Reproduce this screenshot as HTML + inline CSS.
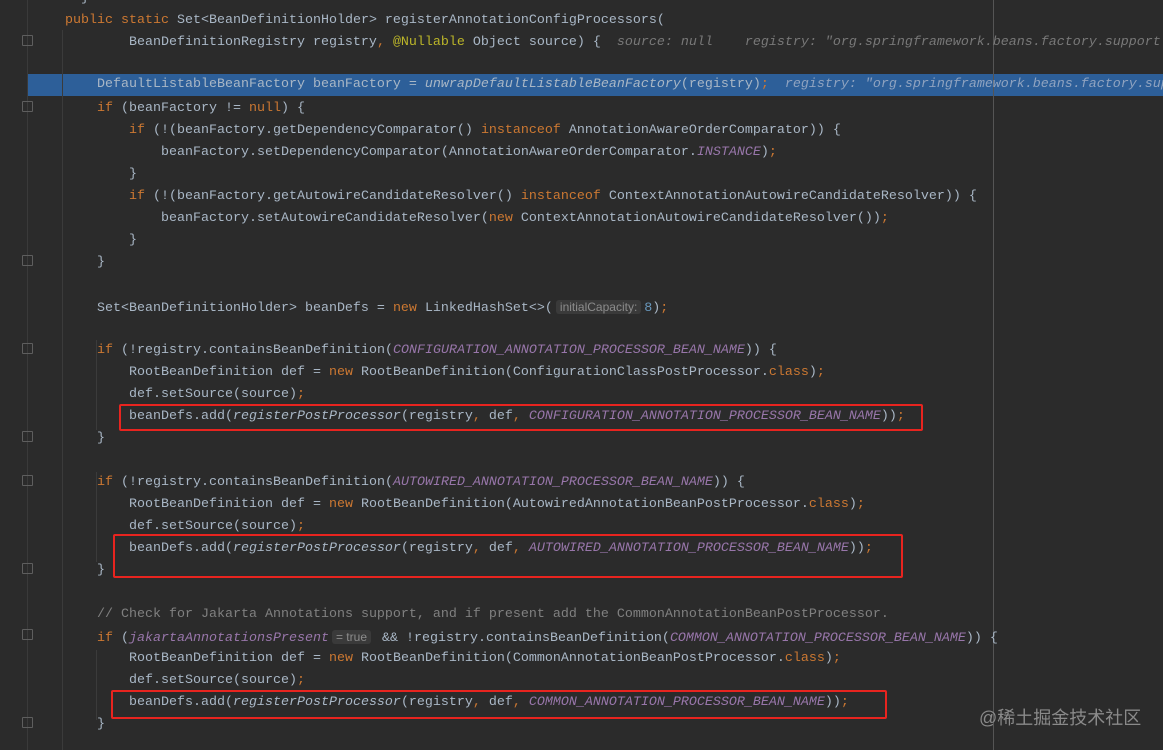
<!DOCTYPE html>
<html><head><meta charset="utf-8"><style>
body{margin:0;width:1163px;height:750px;background:#2b2b2b;overflow:hidden;position:relative;font-family:"Liberation Mono",monospace;font-size:13.33px;color:#a9b7c6}
.l{position:absolute;left:65px;right:0;overflow:hidden;height:22px;line-height:22px;white-space:pre}
.k{color:#cc7832}.i{font-style:italic}.c{color:#9876aa;font-style:italic}.n{color:#6897bb}.a{color:#bbb529}
.cm{color:#808080}.g{color:#787878;font-style:italic}
.p{font-family:"Liberation Sans",sans-serif;font-size:12px;color:#8c8c8c;background:#3a3a3a;border-radius:3px;padding:0 4px;margin:0 3px}
.hl{position:absolute;left:28px;right:0;top:74px;height:22px;background:#2d5f99}
.box{position:absolute;border:2px solid #e8241f;border-radius:2px}
.v{position:absolute;width:1px;background:#3b3b3b}
.f{position:absolute;left:22px;width:9px;height:9px;border:1px solid #5e5e5e;border-radius:1px}
</style></head><body>
<div class="hl"></div>
<div class="v" style="left:62px;top:30px;height:720px"></div>
<div class="v" style="left:27px;top:0;height:750px;background:#3a3a3a"></div>
<div class="v" style="left:993px;top:0;height:750px;background:#555"></div>
<div class="v" style="left:96px;top:340px;height:90px"></div>
<div class="v" style="left:96px;top:472px;height:90px"></div>
<div class="v" style="left:96px;top:650px;height:70px"></div>
<div class="f" style="top:35px"></div><div class="f" style="top:101px"></div><div class="f" style="top:255px"></div>
<div class="f" style="top:343px"></div><div class="f" style="top:431px"></div><div class="f" style="top:475px"></div>
<div class="f" style="top:563px"></div><div class="f" style="top:629px"></div><div class="f" style="top:717px"></div>
<div style="position:absolute;left:0;right:0;top:2px">
<div class="l" style="top:-14px">  }</div>
<div class="l" style="top:8px"><span class="k">public static </span>Set&lt;BeanDefinitionHolder&gt; registerAnnotationConfigProcessors(</div>
<div class="l" style="top:30px">        BeanDefinitionRegistry registry<span class="k">, </span><span class="a">@Nullable </span>Object source) {  <span class="g">source: null    registry: "org.springframework.beans.factory.support.DefaultListableBeanFactory</span></div>
<div class="l" style="top:72px">    DefaultListableBeanFactory beanFactory = <span class="i">unwrapDefaultListableBeanFactory</span>(registry)<span class="k">;</span>  <span class="g" style="color:#8fa3c0">registry: "org.springframework.beans.factory.support.DefaultListableBeanFactory</span></div>
<div class="l" style="top:96px">    <span class="k">if </span>(beanFactory != <span class="k">null</span>) {</div>
<div class="l" style="top:118px">        <span class="k">if </span>(!(beanFactory.getDependencyComparator() <span class="k">instanceof </span>AnnotationAwareOrderComparator)) {</div>
<div class="l" style="top:140px">            beanFactory.setDependencyComparator(AnnotationAwareOrderComparator.<span class="c">INSTANCE</span>)<span class="k">;</span></div>
<div class="l" style="top:162px">        }</div>
<div class="l" style="top:184px">        <span class="k">if </span>(!(beanFactory.getAutowireCandidateResolver() <span class="k">instanceof </span>ContextAnnotationAutowireCandidateResolver)) {</div>
<div class="l" style="top:206px">            beanFactory.setAutowireCandidateResolver(<span class="k">new </span>ContextAnnotationAutowireCandidateResolver())<span class="k">;</span></div>
<div class="l" style="top:228px">        }</div>
<div class="l" style="top:250px">    }</div>
<div class="l" style="top:294px">    Set&lt;BeanDefinitionHolder&gt; beanDefs = <span class="k">new </span>LinkedHashSet&lt;&gt;(<span class="p">initialCapacity:</span><span class="n">8</span>)<span class="k">;</span></div>
<div class="l" style="top:338px">    <span class="k">if </span>(!registry.containsBeanDefinition(<span class="c">CONFIGURATION_ANNOTATION_PROCESSOR_BEAN_NAME</span>)) {</div>
<div class="l" style="top:360px">        RootBeanDefinition def = <span class="k">new </span>RootBeanDefinition(ConfigurationClassPostProcessor.<span class="k">class</span>)<span class="k">;</span></div>
<div class="l" style="top:382px">        def.setSource(source)<span class="k">;</span></div>
<div class="l" style="top:404px">        beanDefs.add(<span class="i">registerPostProcessor</span>(registry<span class="k">, </span>def<span class="k">, </span><span class="c">CONFIGURATION_ANNOTATION_PROCESSOR_BEAN_NAME</span>))<span class="k">;</span></div>
<div class="l" style="top:426px">    }</div>
<div class="l" style="top:470px">    <span class="k">if </span>(!registry.containsBeanDefinition(<span class="c">AUTOWIRED_ANNOTATION_PROCESSOR_BEAN_NAME</span>)) {</div>
<div class="l" style="top:492px">        RootBeanDefinition def = <span class="k">new </span>RootBeanDefinition(AutowiredAnnotationBeanPostProcessor.<span class="k">class</span>)<span class="k">;</span></div>
<div class="l" style="top:514px">        def.setSource(source)<span class="k">;</span></div>
<div class="l" style="top:536px">        beanDefs.add(<span class="i">registerPostProcessor</span>(registry<span class="k">, </span>def<span class="k">, </span><span class="c">AUTOWIRED_ANNOTATION_PROCESSOR_BEAN_NAME</span>))<span class="k">;</span></div>
<div class="l" style="top:558px">    }</div>
<div class="l" style="top:602px">    <span class="cm">// Check for Jakarta Annotations support, and if present add the CommonAnnotationBeanPostProcessor.</span></div>
<div class="l" style="top:624px">    <span class="k">if </span>(<span class="c">jakartaAnnotationsPresent</span><span class="p">= true</span> &amp;&amp; !registry.containsBeanDefinition(<span class="c">COMMON_ANNOTATION_PROCESSOR_BEAN_NAME</span>)) {</div>
<div class="l" style="top:646px">        RootBeanDefinition def = <span class="k">new </span>RootBeanDefinition(CommonAnnotationBeanPostProcessor.<span class="k">class</span>)<span class="k">;</span></div>
<div class="l" style="top:668px">        def.setSource(source)<span class="k">;</span></div>
<div class="l" style="top:690px">        beanDefs.add(<span class="i">registerPostProcessor</span>(registry<span class="k">, </span>def<span class="k">, </span><span class="c">COMMON_ANNOTATION_PROCESSOR_BEAN_NAME</span>))<span class="k">;</span></div>
<div class="l" style="top:712px">    }</div>
</div>
<div class="box" style="left:119px;top:404px;width:800px;height:23px"></div>
<div class="box" style="left:113px;top:534px;width:786px;height:40px"></div>
<div class="box" style="left:111px;top:690px;width:772px;height:25px"></div>

<div style="position:absolute;left:979px;top:704px;font-family:'Liberation Sans','Noto Sans CJK SC',sans-serif;font-size:18px;color:#8a8a8a">@稀土掘金技术社区</div>
</body></html>
